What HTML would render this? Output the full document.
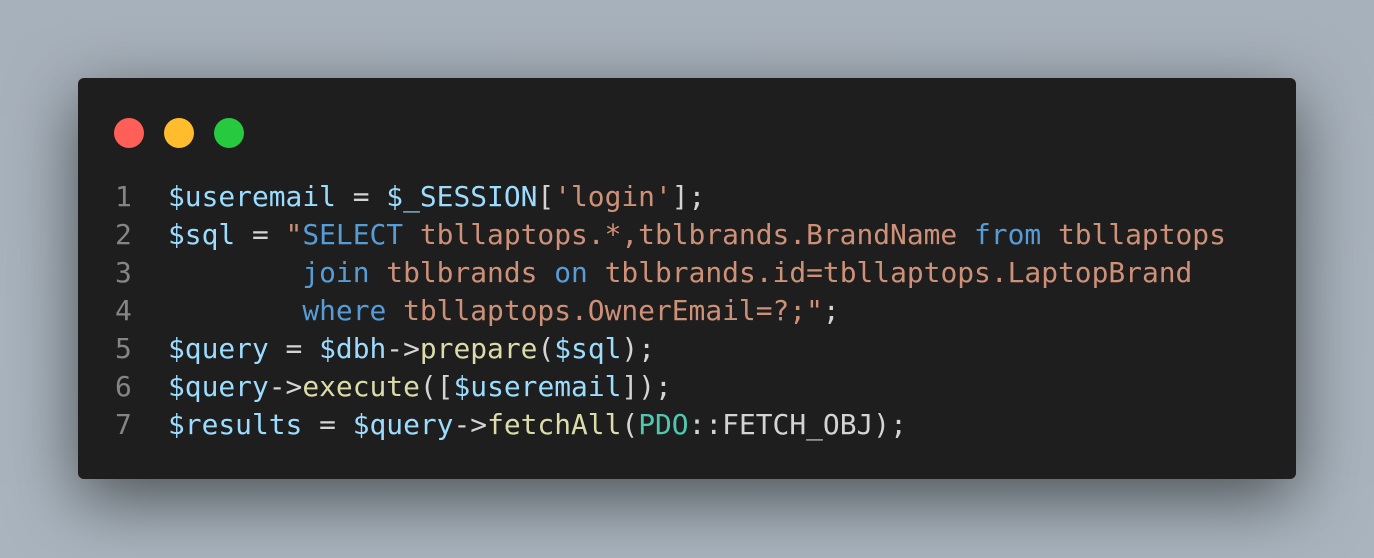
<!DOCTYPE html>
<html><head><style>
html,body{margin:0;padding:0;width:1374px;height:558px;overflow:hidden;background:linear-gradient(180deg,#a7b1bb,#a9b4be);}
.win{position:absolute;left:78px;top:78px;width:1218px;height:401px;background:#1e1e1e;border-radius:6px;box-shadow:0 20px 68px rgba(0,0,0,0.55);}
.dot{position:absolute;top:40px;width:30px;height:30px;border-radius:50%;}
pre{position:absolute;left:0;top:100px;margin:0;font-family:"DejaVu Sans Mono","Liberation Mono",monospace;font-size:27.9px;line-height:38px;color:#d4d4d4;}
.ln{display:inline-block;width:90px;color:#858585;text-align:left;padding-left:37px;box-sizing:border-box;}
.v{color:#9cdcfe}.s{color:#ce9178}.k{color:#569cd6}.f{color:#dcdcaa}.c{color:#4ec9b0}
</style></head><body>
<div class="win">
<div class="dot" style="left:36px;background:#ff5f56"></div>
<div class="dot" style="left:86px;background:#ffbd2e"></div>
<div class="dot" style="left:136px;background:#27c93f"></div>
<pre><span class="ln">1</span><span class="v">$useremail</span> = <span class="v">$_SESSION</span>[<span class="s">'login'</span>];
<span class="ln">2</span><span class="v">$sql</span> = <span class="s">"</span><span class="k">SELECT</span><span class="s"> tbllaptops.*,tblbrands.BrandName </span><span class="k">from</span><span class="s"> tbllaptops</span>
<span class="ln">3</span><span class="s">        </span><span class="k">join</span><span class="s"> tblbrands </span><span class="k">on</span><span class="s"> tblbrands.id=tbllaptops.LaptopBrand</span>
<span class="ln">4</span><span class="s">        </span><span class="k">where</span><span class="s"> tbllaptops.OwnerEmail=?;"</span>;
<span class="ln">5</span><span class="v">$query</span> = <span class="v">$dbh</span>-><span class="f">prepare</span>(<span class="v">$sql</span>);
<span class="ln">6</span><span class="v">$query</span>-><span class="f">execute</span>([<span class="v">$useremail</span>]);
<span class="ln">7</span><span class="v">$results</span> = <span class="v">$query</span>-><span class="f">fetchAll</span>(<span class="c">PDO</span>::FETCH_OBJ);</pre>
</div>
</body></html>
